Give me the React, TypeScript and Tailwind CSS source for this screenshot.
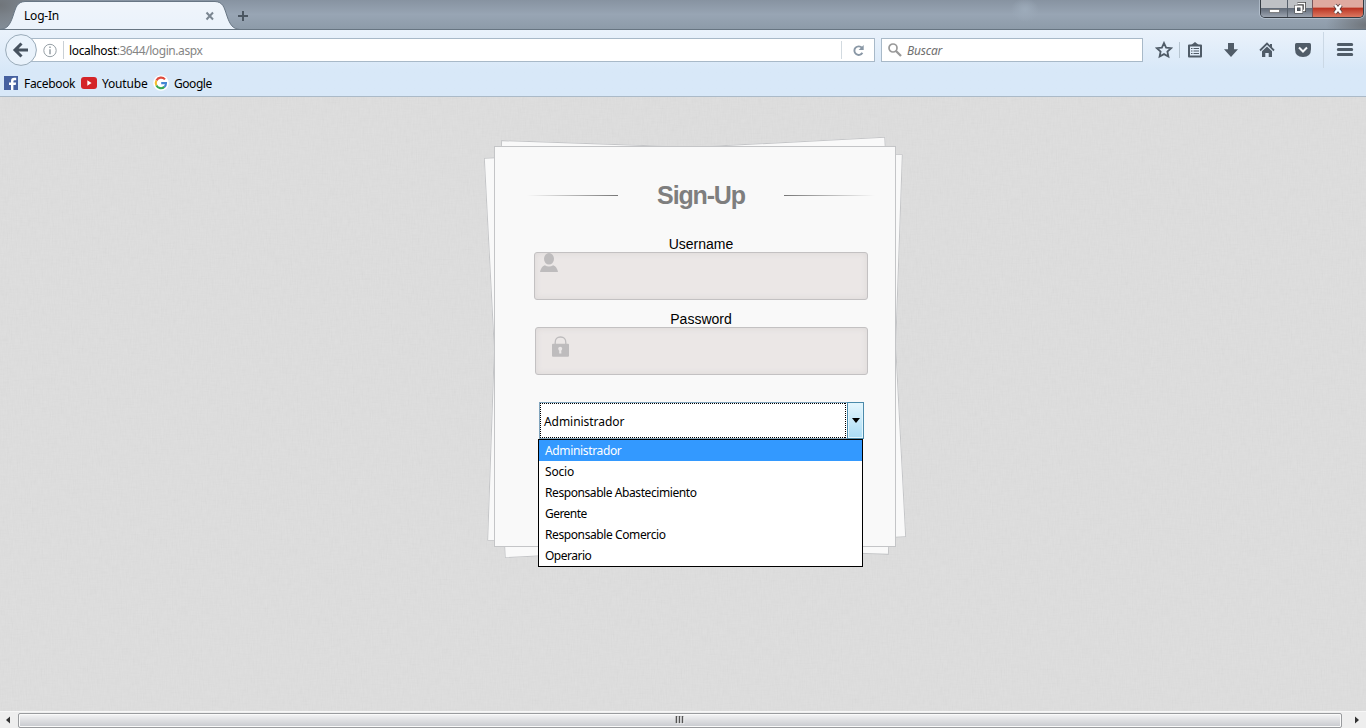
import type { ReactNode } from "react";

const options = ["Administrador", "Socio", "Responsable Abastecimiento", "Gerente", "Responsable Comercio", "Operario"];
const spacing = ["tracking-[-0.35px]", "tracking-[-0.2px]", "tracking-[-0.42px]", "tracking-[-0.55px]", "tracking-[-0.4px]", "tracking-[-0.5px]"];

function TabStrip() {
  return (
    <header className="relative flex h-[30px] shrink-0 justify-between overflow-hidden border-b border-[#677582] bg-gradient-to-b from-[#8793a1] via-[#98a5b4] to-[#8d9ba9]">
      <div className="absolute inset-0 bg-[radial-gradient(ellipse_60px_40px_at_0px_5px,#70757a,transparent),radial-gradient(ellipse_14px_12px_at_1025px_10px,#9dabba,transparent),radial-gradient(ellipse_40px_20px_at_1366px_25px,#70757b,transparent)]" />
      <svg className="absolute top-0 left-0 z-10" width="260" height="30" viewBox="0 0 260 30">
        <defs><linearGradient id="tab" x2="0" y2="1"><stop stopColor="#f0f5fb" /><stop offset="1" stopColor="#eaf2fb" /></linearGradient></defs>
        <path d="M0 30V29.5C7 29 10 25 13 16C16 7 17 2 25 1.5H215C223 2 224 7 227 16C230 25 233 29 240 29.5V30Z" fill="url(#tab)" />
        <path d="M0 29.5C7 29 10 25 13 16C16 7 17 2 25 1.5H215C223 2 224 7 227 16C230 25 233 29 240 29.5" fill="none" stroke="#687684" />
        <path d="m206.5 12.5 6.5 7m0-7-6.5 7" stroke="#7b8691" strokeWidth="2" />
        <path d="M238 16h10m-5-5v10" stroke="#4b5661" strokeWidth="2" />
      </svg>
      <div className="relative z-20 flex w-60 items-center pt-[3px] pl-6 text-[12px]"><span className="tracking-[-0.2px]">Log-In</span></div>
      <div className="relative mr-[2px] flex h-[18px] w-[104px] overflow-hidden rounded-b-[5px] border border-t-0 border-[#343b43] shadow-[0_0_0_1px_rgba(205,218,229,.5)]">
        <div className="flex w-[27px] items-center justify-center border-r border-[#56606b] bg-gradient-to-b from-[#bec1c5] from-45% via-[#626c79] via-50% to-[#9ca4b0]">
          <svg width="16" height="16"><path d="M3.5 8.5h10v3h-10z" fill="#fff" stroke="#555" strokeWidth=".6" /></svg>
        </div>
        <div className="flex w-[25px] items-center justify-center border-r border-[#78555b] bg-gradient-to-b from-[#bec1c5] from-45% via-[#626c79] via-50% to-[#9ca4b0]">
          <svg width="16" height="16" viewBox="0 0 16 16"><path d="M5.5 2.5h7v7h-2" fill="none" stroke="#444" strokeWidth="3" /><path d="M5.5 2.5h7v7h-2" fill="none" stroke="white" strokeWidth="1.4" /><path d="M4 5.5h5.5v5.5H4z" fill="#535d68" stroke="#444" strokeWidth="3" /><path d="M4 5.5h5.5v5.5H4z" fill="none" stroke="#fff" strokeWidth="2" /></svg>
        </div>
        <div className="flex flex-1 items-center justify-center bg-gradient-to-b from-[#dfaaa0] from-40% via-[#bb3524] via-50% to-[#dc7861]">
          <svg width="14" height="14"><path d="m4 3 6 8m0-8-6 8" stroke="#583d3d" strokeWidth="4" /><path d="m4 3 6 8m0-8-6 8" stroke="#fff" strokeWidth="2.4" /></svg>
        </div>
      </div>
    </header>
  );
}

function Icon({ children }: { children: ReactNode }) {
  return <svg width="18" height="18" viewBox="0 0 18 18" fill="none" stroke="#505c68">{children}</svg>;
}

function Navigation() {
  return (
    <nav className="relative flex h-10 items-center">
      <svg className="absolute top-[3px] left-1 z-10" width="34" height="34">
        <circle cx="17" cy="17" r="15.4" fill="#e9f2fb" stroke="#9aabb9" />
        <path d="M24 17H12M17.5 10.5 11 17l6.5 6.5" fill="none" stroke="#46525f" strokeWidth="3" />
      </svg>
      <div className="ml-[28px] flex h-6 w-[847px] items-center border border-[#a8b9c8] bg-white pl-[14px]">
        <svg width="14" height="15" fill="none" stroke="#969fa5"><circle cx="7" cy="7.5" r="6.2" /><path d="M7 6.3v5" strokeWidth="1.5" /><path d="M7 3.5v1.5" strokeWidth="1.5" /></svg>
        <div className="ml-[6px] h-[18px] border-l border-[#cad0d5]" />
        <span className="ml-[5px] pt-[2px] text-[12px] leading-none tracking-[-0.43px] text-[#858585]"><span className="tracking-[-0.34px] text-black">localhost</span>:3644/login.aspx</span>
        <div className="ml-auto flex h-[18px] w-[33px] items-center justify-center border-l border-[#d2dae0]">
          <svg width="13" height="13" fill="none" stroke="#8997a5"><path d="M10 3.9A4.3 4.3 0 1 0 10.4 8.8" strokeWidth="1.9" /><path d="M11.7 1v5.1H6.6Z" fill="#8997a5" stroke="none" /></svg>
        </div>
      </div>
      <div className="ml-[6px] flex h-6 w-[262px] items-center border border-[#a8b9c8] bg-white pl-[6px]">
        <svg width="15" height="15" fill="none" stroke="#999"><circle cx="5" cy="5" r="4" strokeWidth="1.7" /><path d="m8 8 5 5" strokeWidth="2.3" /></svg>
        <span className="ml-1 pt-[2px] text-[12px] leading-none tracking-[-0.2px] text-[#707070] italic">Buscar</span>
      </div>
      <div className="ml-3 flex items-center">
        <Icon><path d="m9 2 2.1 4.6 5 .6-3.7 3.4 1 5L9 13.1l-4.4 2.5 1-5-3.7-3.4 5-.6Z" strokeWidth="1.8" /></Icon>
        <div className="ml-[6px] h-4 border-l border-[#b7c5d1]" />
        <div className="ml-[6px]"><Icon><path d="M3 4.5h12v11H3z" strokeWidth="2" strokeLinejoin="round" /><path d="M5.5 5V3.8L9 1l3.5 2.8V5Z" fill="#505c68" stroke="none" /><path d="M5 7.5h1.5m1 0H13M5 10h1.5m1 0H13M5 12.5h1.5m1 0H13" strokeWidth="1.1" /></Icon></div>
        <div className="ml-[18px]"><Icon><path d="M6 2h6v6.2h4L9 16 2 8.2h4Z" fill="#505c68" stroke="none" /></Icon></div>
        <div className="ml-[18px]"><Icon><path d="m2 9.5 7-7 7 7" strokeWidth="1.8" /><path d="M4 10.2 9 5.5l5 4.7V16h-3.3v-4H7.3v4H4ZM12 3h2v4l-2-2Z" fill="#505c68" stroke="none" /></Icon></div>
        <div className="ml-[18px]"><Icon><path d="M2.5 2h13q1.5 0 1.5 1.5V8q0 8-8 8T1 8V3.5Q1 2 2.5 2Z" fill="#505c68" stroke="none" /><path d="m5 6.5 4 4 4-4" stroke="#f4f8fc" strokeWidth="2" /></Icon></div>
        <div className="ml-[11px] h-9 border-l border-[#cbd8e5]" />
        <div className="ml-[12px]"><Icon><path d="M2.3 3.5h13.4M2.3 8.5h13.4M2.3 13.5h13.4" strokeWidth="3" strokeLinecap="round" /></Icon></div>
      </div>
    </nav>
  );
}

function Bookmarks() {
  return (
    <div className="flex h-[27px] items-center border-b border-[#abbac8] pl-[4px] text-[12px]">
      <svg width="14" height="14"><path d="M0 0h14v14H0z" fill="#4661a0" /><path d="M7 14V9H5V6.5h2V5q0-3.2 3.2-3.2h2v2.5h-1.5q-1.3 0-1.3 1.2v1h2.7L11.7 9H9.4v5Z" fill="#fff" /></svg>
      <span className="ml-[6px] w-[51px] pt-[2px] tracking-[-0.33px]">Facebook</span>
      <svg className="ml-[6px]" width="16" height="12"><rect width="16" height="12" rx="3" fill="#d42428" /><path d="m6.3 3.3 4.3 2.7-4.3 2.7Z" fill="#fff" /></svg>
      <span className="ml-[5px] w-[45px] pt-[2px] tracking-[-0.18px]">Youtube</span>
      <svg className="ml-[6px]" width="16" height="16" viewBox="0 0 16 16"><circle cx="8" cy="8" r="7.8" fill="white" /><g fill="none" strokeWidth="2.1"><path d="M12 4.4A5.2 5.2 0 0 0 3.4 5.5" stroke="#df4a3d" /><path d="M3.4 5.5a5.2 5.2 0 0 0 0 5" stroke="#f5bd2e" /><path d="M3.4 10.5a5.2 5.2 0 0 0 8 1.4" stroke="#36a852" /><path d="M11.4 11.9A5 5 0 0 0 13 8.1H8.2" stroke="#4285d4" /></g></svg>
      <span className="ml-[5px] pt-[2px] tracking-[-0.45px]">Google</span>
    </div>
  );
}

function Field({ label, password = false }: { label: string; password?: boolean }) {
  return (
    <div className={password ? "mt-[11px]" : ""}>
      <div className="h-4 text-center font-['Liberation_Sans',sans-serif] text-[14px] leading-4">{label}</div>
      <div className={password ? "ml-px flex h-12 rounded-[3px] border border-[#c3c1c2] bg-[#ebe7e6] pt-[7px] pl-[15px] shadow-[inset_0_0_6px_#dbd7d7]" : "flex h-12 rounded-[3px] border border-[#c3c1c2] bg-[#ebe7e6] pl-[4px] shadow-[inset_0_0_6px_#dbd7d7]"}>
        {password ? <svg width="19" height="22" fill="#bebcbd"><path d="M4.2 10V7.5Q4.2 2 9.5 2t5.3 5.5V10" fill="none" stroke="#bebcbd" strokeWidth="1.3" /><path d="M2 8.8h15q1 0 1 1v11q0 1-1 1H2q-1 0-1-1v-11q0-1 1-1Z" /><circle cx="9.2" cy="13.8" r="2" fill="#eae7e7" /><path d="M8.3 14h1.8l.3 4.5H8.2Z" fill="#eae7e7" /></svg> : <svg width="20" height="20" fill="#bebcbd"><ellipse cx="10" cy="5.8" rx="5" ry="5.8" /><path d="M1 19q0-1.5 1.8-4.5Q3.6 13 5.8 12.2q4.2 2.4 8.4 0 2.2.8 3 2.3Q19 17.5 19 19Z" /></svg>}
      </div>
    </div>
  );
}

function RoleSelect() {
  return (
    <div className="relative mt-[27px] ml-[5px] h-[37px] w-[325px] border border-[#82a5bd] bg-white text-[12px]">
      <div className="flex h-full">
        <div className="relative flex flex-1 items-center pt-[2px] pl-1">
          <svg className="absolute inset-0" width="307" height="35"><path d="M0 .5h306M0 34.5h306M.5 0v35M305.5 0v35" fill="none" stroke="#000" strokeDasharray="1 1" /></svg>
          <span className="relative tracking-[-0.05px]">Administrador</span>
        </div>
        <div className="-mt-px -mr-px -mb-px flex w-[17px] items-center justify-center border border-[#4b8aab] bg-gradient-to-b from-[#e5f6fd] to-[#a9dcf5] shadow-[inset_0_0_0_1px_#e1f5fc]">
          <svg width="8" height="5"><path d="M0 0h8L4 5Z" /></svg>
        </div>
      </div>
      <div className="absolute top-[36px] left-[-2px] z-20 h-[128px] w-[325px] border border-black bg-white">
        {options.map((option, i) => <div key={option} className={i === 0 ? "flex h-[21px] items-center bg-[#3399ff] pt-px pl-[6px] text-white" : "flex h-[21px] items-center pt-px pl-[6px]"}><span className={spacing[i]}>{option}</span></div>)}
      </div>
    </div>
  );
}

function LoginPage() {
  return (
    <main className="relative flex-1 bg-[#dfdfdf] pt-[49px]">
      <svg className="absolute inset-0 h-full w-full opacity-[.13]"><filter id="weave"><feTurbulence type="fractalNoise" baseFrequency=".1 .8" numOctaves="2" seed="4" /><feColorMatrix values=".6 .6 0 0 -.1 .6 .6 0 0 -.1 .6 .6 0 0 -.1 0 0 0 0 .5" /></filter><filter id="warp"><feTurbulence type="fractalNoise" baseFrequency=".8 .1" numOctaves="2" seed="8" /><feColorMatrix values=".6 .6 0 0 -.1 .6 .6 0 0 -.1 .6 .6 0 0 -.1 0 0 0 0 .5" /></filter><rect width="100%" height="100%" filter="url(#weave)" opacity=".6" /><rect width="100%" height="100%" filter="url(#warp)" opacity=".6" /></svg>
      <section className="relative ml-[494px] h-[401px] w-[402px]">
        <div className="absolute inset-0 translate-y-px rotate-[2deg] border border-[#c4c5c7] bg-[#f9f9f9]" />
        <div className="absolute inset-0 translate-y-px rotate-[-3deg] border border-[#c4c5c7] bg-[#f9f9f9]" />
        <div className="relative flex h-full flex-col border border-[#c4c5c7] bg-[#f9f9f9] pt-[32px] pr-[27px] pl-[39px]">
          <div className="-mr-[7px] -ml-[7px] flex h-8 items-center justify-between">
            <div className="h-px w-[91px] bg-gradient-to-r from-transparent to-[#777]" />
            <h1 className="font-['Liberation_Sans',sans-serif] text-[25px] leading-8 font-bold tracking-[-1.15px] text-[#7e7e7e]">Sign-Up</h1>
            <div className="h-px w-[91px] bg-gradient-to-l from-transparent to-[#777]" />
          </div>
          <div className="mt-[25px] w-[334px]"><Field label="Username" /><Field label="Password" password /><RoleSelect /></div>
        </div>
      </section>
    </main>
  );
}

export default function App() {
  return (
    <div className="flex h-[728px] w-[1366px] flex-col overflow-hidden bg-[#ddd] font-['Noto_Sans',sans-serif] text-black">
      <TabStrip />
      <div className="h-[67px] shrink-0 bg-gradient-to-b from-[#eaf2fb] to-[#d8e8f8] to-60%"><Navigation /><Bookmarks /></div>
      <LoginPage />
      <footer className="flex h-[17px] shrink-0 items-center border-t border-[#f7f7f7] bg-[#eee]">
        <svg className="ml-[6px]" width="5" height="8"><path d="M0 4 4 .5v7Z" fill="#333" /></svg>
        <div className="ml-[7px] flex h-[15px] w-[1324px] items-center justify-center rounded-[2px] border border-[#999b9e] bg-gradient-to-b from-[#f5f5f6] via-[#dddee1] via-50% to-[#c7c9ce] shadow-[inset_0_0_0_1px_#fafafa]">
          <svg width="10" height="8"><path d="M1.5 0v7m3-7v7m3-7v7" stroke="#555" strokeWidth="1.6" /><path d="M2.8 1v7m3-7v7m3-7v7" stroke="#fff" strokeWidth=".6" /></svg>
        </div>
        <svg className="ml-[13px]" width="5" height="8"><path d="M4 4 0 .5v7Z" fill="#333" /></svg>
      </footer>
    </div>
  );
}
